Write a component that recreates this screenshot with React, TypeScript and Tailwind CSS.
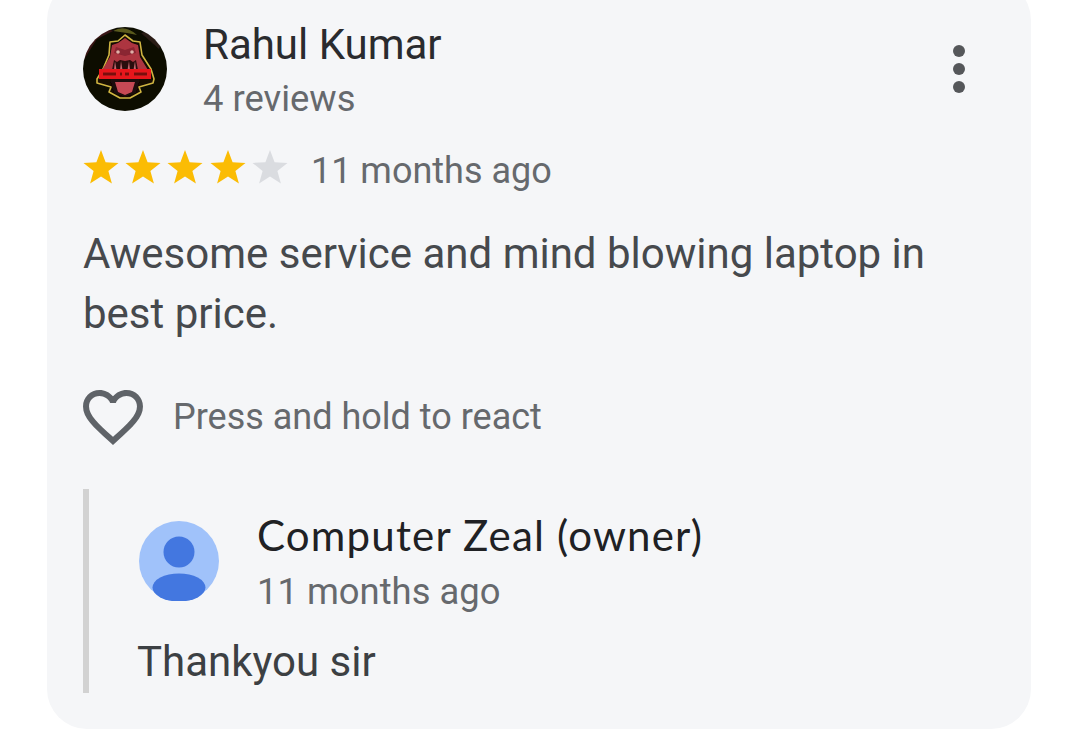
export default function App() {
  const Star = ({ c }: { c: string }) => (
    <svg viewBox="0 0 36 36" className="w-[36px] h-[36px] shrink-0 mr-[6.200px]">
      <path d="M18 1 L22.6 13.3 L35.5 13.9 L25.4 22 L28.9 34.6 L18 27.4 L7.1 34.6 L10.6 22 L0.5 13.9 L13.4 13.3 Z" fill={c} />
    </svg>
  );
  return (
    <div className="w-[1079px] h-[754px] overflow-hidden bg-white font-['Roboto',sans-serif]">
      <div className="ml-[47px] -mt-[20px] w-[984px] h-[749px] bg-[#f5f6f8] rounded-[40px] pl-[36px] pt-[47px] pr-[60px]">
        <div className="flex items-start">
          <svg viewBox="0 0 84 84" className="w-[84px] h-[84px] shrink-0">
            <defs>
              <clipPath id="av"><circle cx="42" cy="42" r="42" /></clipPath>
              <filter id="soft"><feGaussianBlur stdDeviation="0.35" /></filter>
            </defs>
            <g clipPath="url(#av)" filter="url(#soft)">
              <rect width="84" height="84" fill="#0c0a05" />
              <path d="M0 34 L14 12 L30 4 L20 0 L0 0 Z" fill="#3a1712" />
              <path d="M30 4 Q42 -3 54 8 L44 6 Z" fill="#5a5a1c" />
              <path d="M58 6 L76 22 L84 0 Z" fill="#2a1c12" />
              <path d="M42 8 L50 14 L57 15 L59 28 L68 42 L71 52 L70 56 L56 60 L58 65 L47 71 L37 71 L26 65 L28 60 L14 56 L14 52 L20 42 L26 28 L27 15 L35 14 Z" fill="#120705" stroke="#d0b640" strokeWidth="1.600" strokeLinejoin="round" />
              <path d="M42 11 L49 16 L55 18 L57 30 L65 43 L19 43 L27 30 L29 18 L35 16 Z" fill="#ad3540" />
              <path d="M33 20 L42 23 L51 20 L53 26 L42 29 L31 26 Z" fill="#8a2530" />
              <circle cx="35" cy="25" r="1.800" fill="#e0b0a8" />
              <circle cx="49" cy="25" r="1.800" fill="#e0b0a8" />
              <path d="M29 43 L31 33 L34 35 L37 33 L42 34 L47 33 L50 35 L53 33 L55 43 Z" fill="#2a0c0c" />
              <path d="M31 43 L32 34 L33.500 43 Z M37 43 L38 34 L39.500 43 Z M44.500 43 L46 34 L47 43 Z M50.500 43 L52 34 L53 43 Z" fill="#c0686f" />
              <path d="M27 52 H57 L53 66 L42 70 L31 66 Z" fill="#1c0808" />
              <path d="M32 55 H52 L49 65 L42 68 L35 65 Z" fill="#c64a55" />
              <rect x="16" y="42" width="52" height="10" fill="#e8181f" />
              <path d="M20 45.500 H33 V48.500 H20 Z M37 45.500 H39 V48.500 H37 Z M42 45.500 H46 V48.500 H42 Z M51 45.500 H64 V48.500 H51 Z" fill="#7a1010" />
            </g>
          </svg>
          <div className="ml-[36px] flex-1 -mt-[6px]">
            <div className="text-[42px] leading-[48px] text-[#2a2b2e]">Rahul Kumar</div>
            <div className="text-[36.400px] leading-[50px] mt-[5px] -mb-[1px] text-[#66696d]">4 reviews</div>
          </div>
          <div className="mt-[18px] mr-[6px] flex flex-col gap-[6px]">
            <div className="w-[12px] h-[12px] rounded-full bg-[#55575a]" />
            <div className="w-[12px] h-[12px] rounded-full bg-[#55575a]" />
            <div className="w-[12px] h-[12px] rounded-full bg-[#55575a]" />
          </div>
        </div>
        <div className="flex items-center mt-[19px] h-[50px]">
          <Star c="#fbbc04" />
          <Star c="#fbbc04" />
          <Star c="#fbbc04" />
          <Star c="#fbbc04" />
          <Star c="#dadce0" />
          <span className="ml-[17px] mt-[7px] text-[36px] text-[#66696d]">11 months ago</span>
        </div>
        <p className="mt-[32px] text-[42px] leading-[60px] text-[#46494d]">
          Awesome service and mind blowing laptop in best price.
        </p>
        <div className="flex items-center mt-[43px] h-[60px]">
          <svg viewBox="2 3 20 18.350" className="w-[60px] h-[55px] shrink-0">
            <path fill="#5f6368" d="M16.500 3c-1.740 0-3.410.810-4.500 2.090C10.910 3.810 9.240 3 7.500 3 4.420 3 2 5.420 2 8.500c0 3.780 3.400 6.860 8.550 11.540L12 21.350l1.450-1.320C18.600 15.360 22 12.280 22 8.500 22 5.420 19.580 3 16.500 3zm-4.400 15.550l-.1.100-.110-.100C7.140 14.240 4 11.390 4 8.500 4 6.500 5.500 5 7.500 5c1.540 0 3.040.990 3.570 2.360h1.870C13.460 5.990 14.960 5 16.500 5c2 0 3.500 1.500 3.500 3.500 0 2.890-3.140 5.740-7.900 10.050z" />
          </svg>
          <span className="ml-[30px] text-[36px] text-[#66696d]">Press and hold to react</span>
        </div>
        <div className="mt-[42px] border-l-[6px] border-[#d2d2d2] pl-[50px] h-[204px]">
          <div className="flex items-start pt-[32px]">
            <svg viewBox="0 0 80 80" className="w-[80px] h-[80px] shrink-0">
              <circle cx="40" cy="40" r="40" fill="#a0c2fa" />
              <circle cx="40" cy="31" r="15.500" fill="#4377e0" />
              <ellipse cx="40" cy="66.500" rx="26.500" ry="14" fill="#4377e0" />
            </svg>
            <div className="ml-[38px] -mt-[10px]">
              <div className="text-[42px] leading-[48px] tracking-[1.200px] text-[#202124] font-['Lato',sans-serif]">Computer Zeal (owner)</div>
              <div className="text-[36.400px] leading-[50px] mt-[8px] text-[#66696d]">11 months ago</div>
            </div>
          </div>
          <p className="-ml-[2px] mt-[15px] text-[42px] leading-[60px] text-[#3c4043]">Thankyou sir</p>
        </div>
      </div>
    </div>
  );
}
